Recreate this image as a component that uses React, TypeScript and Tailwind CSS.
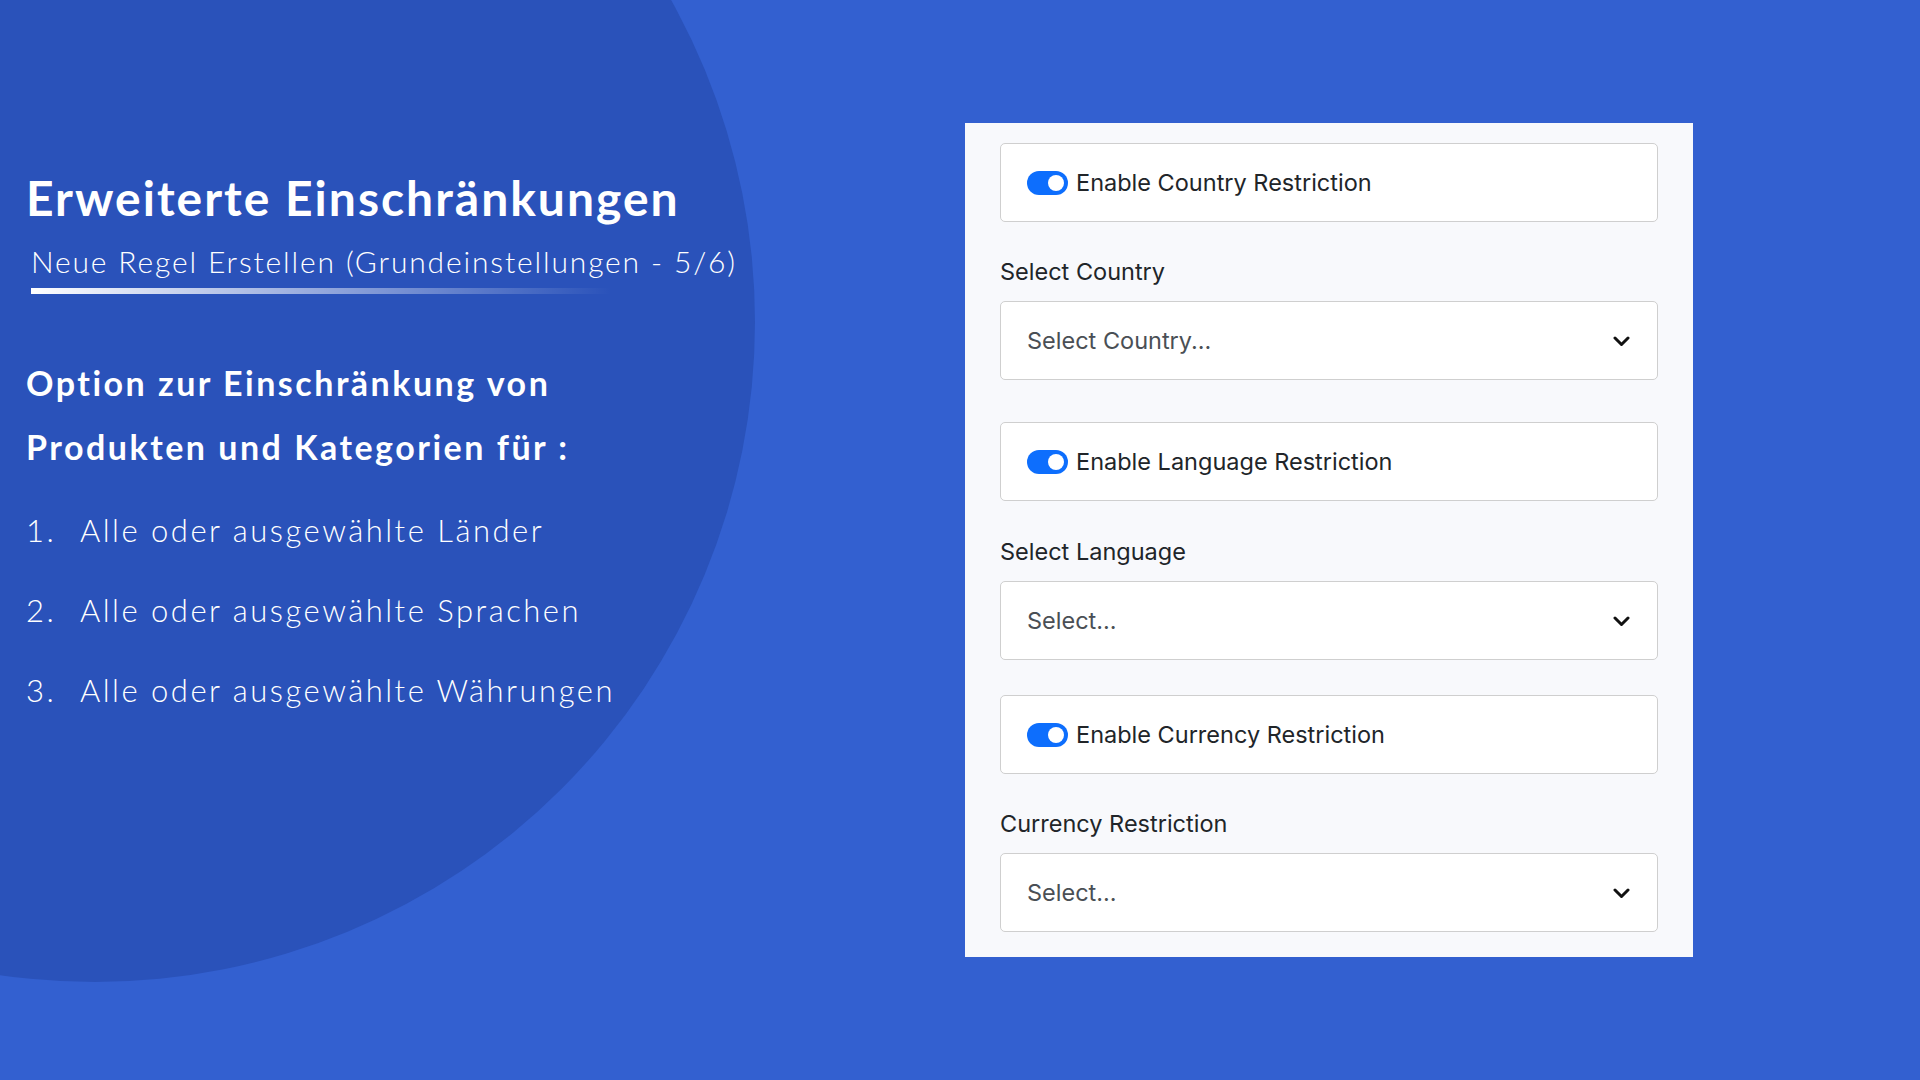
import React from 'react';

const leftFont = { fontFamily: 'Lato, "Open Sans", sans-serif' };
const formFont = { fontFamily: 'Inter, "Liberation Sans", sans-serif' };

function Toggle() {
  return (
    <span className="relative inline-flex h-[24px] w-[41px] shrink-0 items-center rounded-full bg-[#0d6efd]">
      <span className="absolute right-[4px] h-[16px] w-[16px] rounded-full bg-white" />
    </span>
  );
}

function SwitchBox({ label, className = '' }: { label: string; className?: string }) {
  return (
    <div className={`flex h-[79px] items-center gap-[8px] rounded-[5px] border border-[#cfcfcf] bg-white pl-[26px] ${className}`}>
      <Toggle />
      <span className="text-[23.5px] text-[#212529]">{label}</span>
    </div>
  );
}

function SelectField({ label, placeholder, className = '' }: { label: string; placeholder: string; className?: string }) {
  return (
    <div className={className}>
      <div className="text-[23.5px] leading-[30px] text-[#212529]">{label}</div>
      <div className="mt-[14px] flex h-[79px] items-center justify-between rounded-[5px] border border-[#cfcfcf] bg-white pl-[26px] pr-[27px]">
        <span className="text-[23.5px] text-[#4a4f55]">{placeholder}</span>
        <svg width="17" height="12" viewBox="0 0 17 12" fill="none">
          <path d="M2 3l6.5 6.5L15 3" stroke="#111" strokeWidth="3" strokeLinecap="round" strokeLinejoin="round" />
        </svg>
      </div>
    </div>
  );
}

export default function App() {
  const items = [
    'Alle oder ausgewählte Länder',
    'Alle oder ausgewählte Sprachen',
    'Alle oder ausgewählte Währungen',
  ];

  return (
    <div className="relative h-[1080px] w-[1920px] overflow-hidden bg-[#3360d0]">
      {/* darker disc behind the intro text */}
      <div className="absolute left-[-565px] top-[-338px] h-[1320px] w-[1320px] rounded-full bg-[#2a52ba]" />

      <div className="relative flex">
        <div className="w-[965px] pl-[26px] pt-[170px] text-white" style={leftFont}>
          <h1 className="text-[48px] font-bold leading-[56px] tracking-[2px]">Erweiterte Einschränkungen</h1>
          <p className="ml-[5px] mt-[15px] text-[30px] font-light leading-[40px] tracking-[1.85px]">
            Neue Regel Erstellen (Grundeinstellungen - 5/6)
          </p>
          <div className="ml-[5px] mt-[7px] h-[6px] w-[580px] bg-gradient-to-r from-white via-white/50 to-transparent" />

          <h2 className="mt-[57px] text-[34px] font-bold leading-[64px] tracking-[2.5px]">
            Option zur Einschränkung von
            <br />
            Produkten und Kategorien für :
          </h2>

          <ol className="mt-[11px]">
            {items.map((text, i) => (
              <li key={text} className="flex text-[31px] font-light leading-[80px] tracking-[2.5px]">
                <span className="w-[54px]">{i + 1}.</span>
                <span>{text}</span>
              </li>
            ))}
          </ol>
        </div>

        <div className="mt-[123px] w-[728px] bg-[#f8f9fc] px-[35px] pb-[25px] pt-[20px]" style={formFont}>
          <SwitchBox label="Enable Country Restriction" />
          <SelectField label="Select Country" placeholder="Select Country..." className="mt-[35px]" />

          <SwitchBox label="Enable Language Restriction" className="mt-[42px]" />
          <SelectField label="Select Language" placeholder="Select..." className="mt-[36px]" />

          <SwitchBox label="Enable Currency Restriction" className="mt-[35px]" />
          <SelectField label="Currency Restriction" placeholder="Select..." className="mt-[35px]" />
        </div>
      </div>
    </div>
  );
}
